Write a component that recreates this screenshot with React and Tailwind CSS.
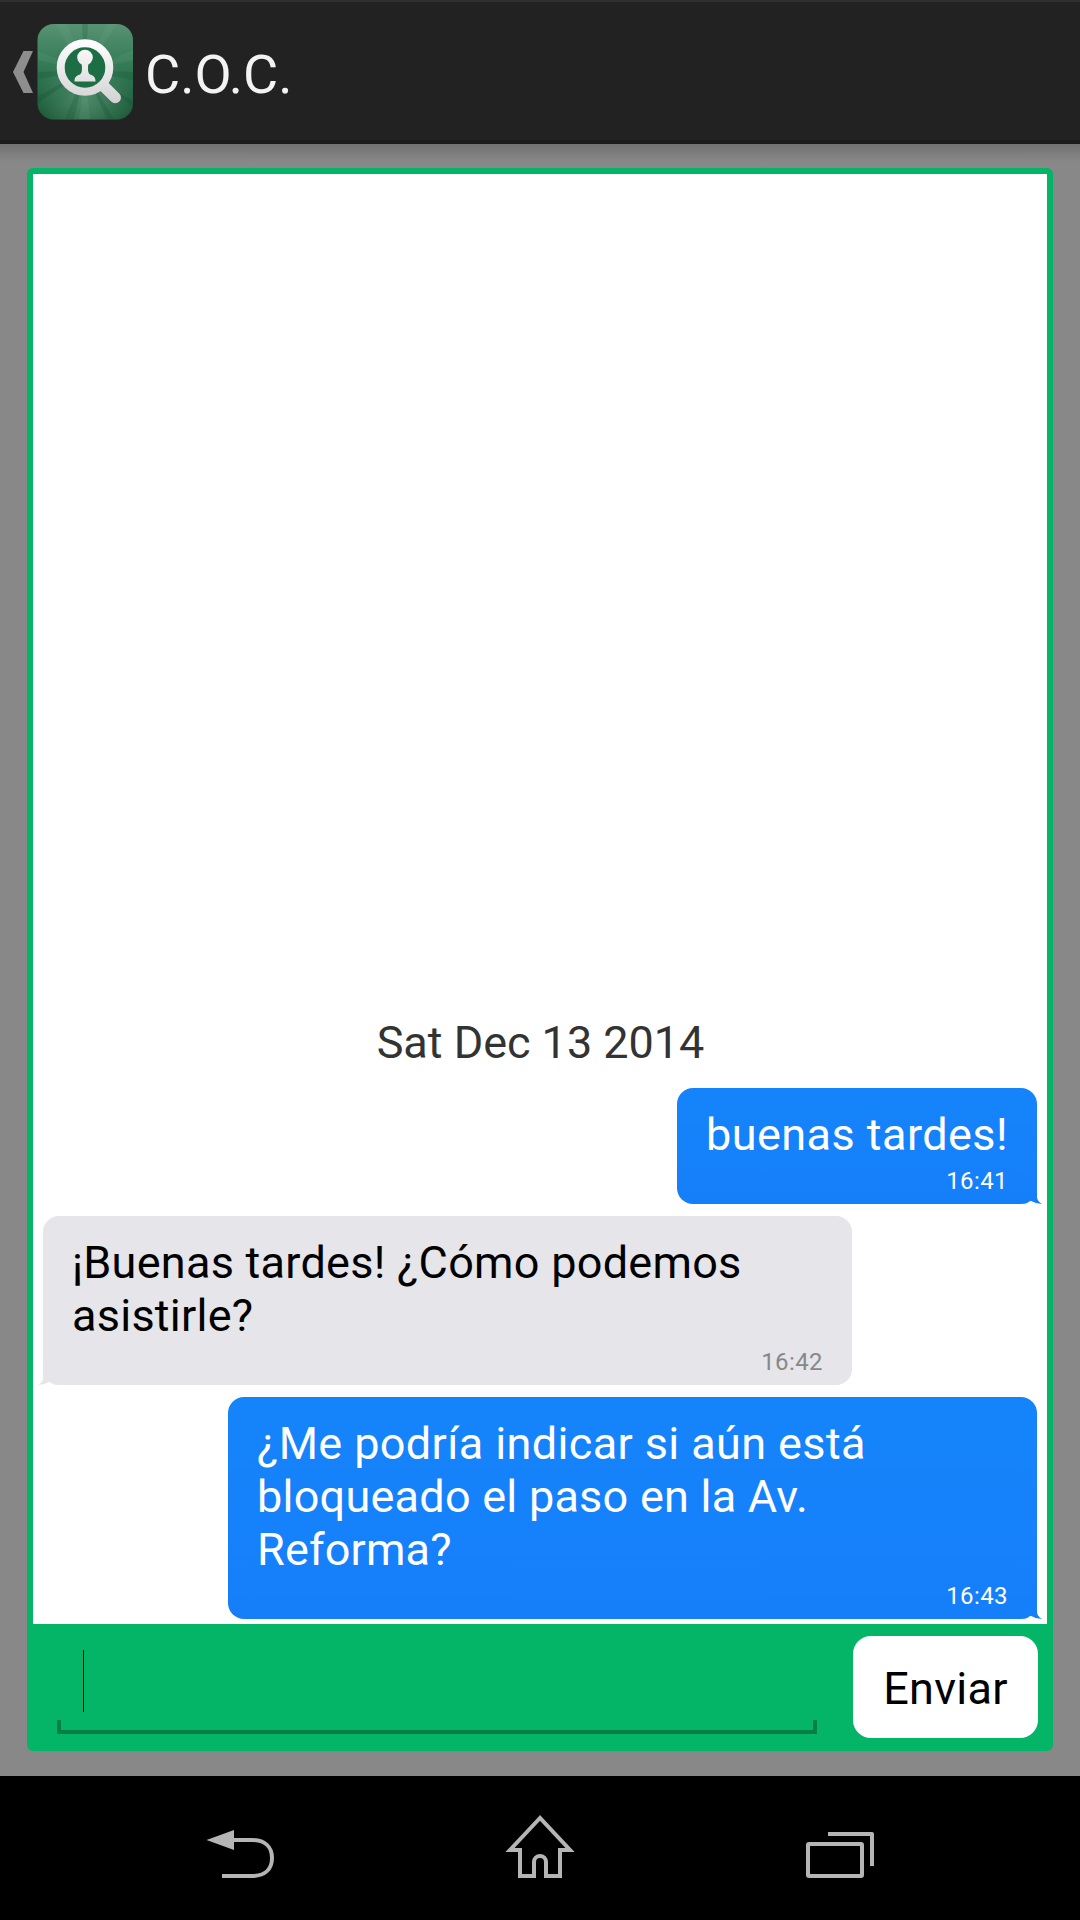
const messages = [
  {
    id: 1,
    mine: true,
    lines: [{ text: "buenas tardes!", tracking: "tracking-[0.45px]" }],
    time: "16:41",
  },
  {
    id: 2,
    mine: false,
    lines: [
      { text: "¡Buenas tardes! ¿Cómo podemos", tracking: "tracking-[0.27px]" },
      { text: "asistirle?", tracking: "tracking-[0.25px]" },
    ],
    time: "16:42",
  },
  {
    id: 3,
    mine: true,
    lines: [
      { text: "¿Me podría indicar si aún está", tracking: "tracking-[0.38px]" },
      { text: "bloqueado el paso en la Av.", tracking: "tracking-[0.24px]" },
      { text: "Reforma?", tracking: "tracking-[0.15px]" },
    ],
    time: "16:43",
  },
];

export default function App() {
  return (
    <div className="flex h-[1920px] w-[1080px] flex-col overflow-hidden bg-[#888888] font-['Roboto',sans-serif]">
      <ActionBar />
      <main className="flex flex-1 flex-col bg-linear-to-b from-[#727272] to-[#888888] to-[18px] px-[27px] pt-6 pb-[25px]">
        <section className="flex flex-1 flex-col overflow-hidden rounded-[6px] bg-[#04b567] px-1.5 pt-1.5">
          <div className="flex h-[1450px] flex-col justify-end bg-white px-2.5 pb-[5px]">
            <p className="mb-[19px] pl-px text-center text-[45px] leading-[53px] tracking-[-0.03px] text-[#333333]">
              Sat Dec 13 2014
            </p>
            <div className="flex flex-col gap-3">
              {messages.map((message) => (
                <Bubble key={message.id} message={message} />
              ))}
            </div>
          </div>
          <Composer />
        </section>
      </main>
      <NavBar />
    </div>
  );
}

function ActionBar() {
  return (
    <header className="flex h-36 shrink-0 items-center border-t-2 border-b-4 border-t-[#303030] border-b-[#1b1b1b] bg-[#222222] pt-0.5">
      <svg className="ml-[13px]" width="20" height="42" viewBox="0 0 20 42" aria-hidden="true">
        <path d="M10.500 0H20L10.500 21L20 42H10.500L0 21Z" fill="#8e8e8e" />
      </svg>
      <AppLogo />
      <h1 className="ml-[11px] pt-[5px] text-[54px] leading-[64px] text-[#f3f3f3]">C.O.C.</h1>
    </header>
  );
}

function AppLogo() {
  return (
    <svg className="ml-1" width="97" height="98" viewBox="0 0 97 98" aria-hidden="true">
      <defs>
        <linearGradient id="tile" x1="0" y1="0" x2="0" y2="1">
          <stop offset="0" stopColor="#579373" />
          <stop offset="0.5" stopColor="#2f7652" />
          <stop offset="1" stopColor="#1b5836" />
        </linearGradient>
        <radialGradient id="glow" cx="0.5" cy="0.8" r="0.5">
          <stop offset="0" stopColor="#69a282" stopOpacity="0.6" />
          <stop offset="1" stopColor="#69a282" stopOpacity="0" />
        </radialGradient>
        <linearGradient id="metal" gradientUnits="userSpaceOnUse" x1="0" y1="16" x2="0" y2="80">
          <stop offset="0" stopColor="#ffffff" />
          <stop offset="1" stopColor="#d2d2d2" />
        </linearGradient>
      </defs>
      <rect x="0.500" y="1" width="95.500" height="95.500" rx="16" fill="url(#tile)" />
      <rect x="0.500" y="1" width="95.500" height="95.500" rx="16" fill="url(#glow)" />
      <g fill="#0d4528" opacity="0.18">
        <path d="M48 48L28 96H37ZM48 48L70 96H77ZM48 48L1 49V56ZM48 48L96 49V57ZM48 48L1 73V80ZM48 48L96 78V84ZM48 48L45 1H51Z" />
      </g>
      <g fill="#8cc0a3" opacity="0.1">
        <path d="M48 48L1 28V37ZM48 48L18 1H30ZM48 48L70 1H80ZM48 48L96 27V37ZM48 48L42 96H53Z" />
      </g>
      <path d="M66 62.500L78.200 74.500" stroke="url(#metal)" strokeWidth="11.500" strokeLinecap="round" />
      <circle cx="48" cy="44.500" r="24.300" fill="#1e6e45" stroke="url(#metal)" strokeWidth="8" />
      <circle cx="48" cy="34.500" r="7.800" fill="url(#metal)" />
      <path
        d="M44.500 39H51.500C50.500 47 51 50 53 51.500C57 53 58.500 54 58.500 58.500H37.500C37.500 54 39 53 43 51.500C45 50 45.500 47 44.500 39Z"
        fill="url(#metal)"
      />
    </svg>
  );
}

function Bubble({ message }) {
  const { mine, lines, time } = message;

  return (
    <article
      className={`relative rounded-[16px] px-[29px] pt-5 pb-[9px] ${
        mine ? "self-end bg-linear-to-b from-[#1584fa] to-[#157ffa] text-white" : "self-start bg-[#e5e5ea] text-black"
      } ${lines.length > 1 ? "w-[809px]" : "w-[360px]"}`}
    >
      {lines.map((line) => (
        <p key={line.text} className={`text-[45px] leading-[53px] whitespace-nowrap ${line.tracking}`}>
          {line.text}
        </p>
      ))}
      <p
        className={`mt-1.5 text-right text-[24px] leading-7 tracking-[0.4px] ${mine ? "text-white" : "text-[#888888]"}`}
      >
        {time}
      </p>
      <svg
        className={`absolute bottom-0 ${mine ? "-right-[5px]" : "-left-[5px] -scale-x-100"}`}
        width="22"
        height="16"
        viewBox="0 0 22 16"
        aria-hidden="true"
      >
        <path d="M2 16Q8 16 10 12L17 0V9Q17 13 22 16Q15 15.500 10 12.500Q6 16 2 16Z" fill={mine ? "#157ffa" : "#e5e5ea"} />
      </svg>
    </article>
  );
}

function Composer() {
  return (
    <form className="flex flex-1 items-start justify-between pt-3 pr-[9px] pl-6">
      <div className="flex h-[98px] w-[760px] flex-col justify-between pt-[14px]">
        <span className="ml-[26px] h-[62px] w-px bg-black" />
        <span className="h-[14px] border-x-4 border-b-4 border-[#047f48]" />
      </div>
      <button
        className="h-[102px] w-[185px] rounded-[18px] bg-white pt-0.5 text-center text-[45px] leading-[53px] tracking-[0.3px] text-black"
        type="button"
      >
        Enviar
      </button>
    </form>
  );
}

function NavBar() {
  return (
    <nav className="flex h-36 shrink-0 items-center justify-around bg-black px-[90px]">
      <svg width="70" height="70" viewBox="0 0 70 70" fill="none" aria-label="Atrás">
        <path d="M1.500 27L29 17V37Z" fill="#b5b5b5" />
        <path d="M28 27H47C60 27 67 34 67 45S60 63 47 63H17" stroke="#b5b5b5" strokeWidth="4" />
      </svg>
      <svg width="70" height="70" viewBox="0 0 70 70" fill="none" aria-label="Inicio">
        <path
          d="M35 5L5 37H15V63H29V49A6 6 0 0 1 41 49V63H55V37H65Z"
          stroke="#b5b5b5"
          strokeWidth="4"
        />
      </svg>
      <svg width="70" height="70" viewBox="0 0 70 70" fill="none" stroke="#b5b5b5" strokeWidth="4" aria-label="Recientes">
        <rect x="3" y="31" width="54" height="32" rx="1" />
        <path d="M23 21H67V53" strokeLinejoin="round" />
      </svg>
    </nav>
  );
}
